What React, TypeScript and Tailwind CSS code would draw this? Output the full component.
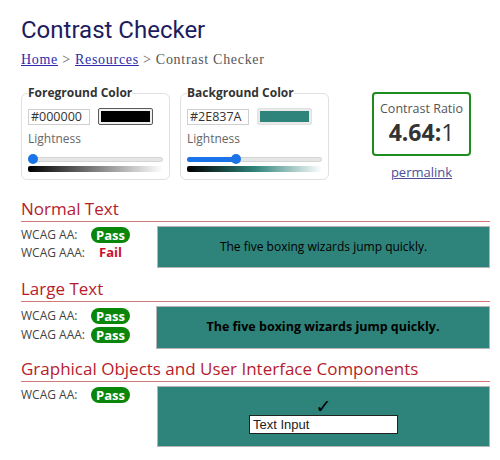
const TEAL = "#2E837A";

function Swatch({ color, dark }: { color: string; dark?: boolean }) {
  return (
    <div
      className={`w-[55px] h-[17px] rounded-[2px] p-[2px] ${
        dark ? "border border-[#5a5a5a] bg-[#efefef]" : "border border-[#e2e2e2] bg-[#e9e9e9]"
      }`}
    >
      <div className="w-full h-full" style={{ backgroundColor: color }} />
    </div>
  );
}

function Slider({ pos, gradient }: { pos: number; gradient: string }) {
  return (
    <>
      <div className="relative h-[10px] mt-[6px]">
        <div className="absolute left-0 right-0 top-[3px] h-[5px] rounded-full bg-[#e6e6e6] border border-[#d4d4d4]" />
        <div
          className="absolute left-0 top-[3px] h-[5px] rounded-full bg-[#1a73e8]"
          style={{ width: pos }}
        />
        <div
          className="absolute top-0 w-[10px] h-[10px] rounded-full bg-[#1a73e8]"
          style={{ left: pos - 5 < 0 ? 0 : pos - 5 }}
        />
      </div>
      <div className="h-[6px] mt-[2px] rounded-[2px]" style={{ background: gradient }} />
    </>
  );
}

function ColorBox({
  title,
  hex,
  color,
  dark,
  pos,
  gradient,
}: {
  title: string;
  hex: string;
  color: string;
  dark?: boolean;
  pos: number;
  gradient: string;
}) {
  return (
    <fieldset className="w-[149px] border border-[#e0e0e0] rounded-[6px] px-[6px] pb-[7px]">
      <legend className="text-[12px] leading-[16px] font-bold text-[#333]">{title}</legend>
      <div className="flex items-center gap-[8px] mt-[7px]">
        <div className="w-[62px] h-[16px] border border-[#cfcfcf] text-[12.5px] leading-[14px] text-[#333] pl-[2px]">
          {hex}
        </div>
        <Swatch color={color} dark={dark} />
      </div>
      <div className="mt-[5px] text-[12px] leading-[18px] text-[#666]">Lightness</div>
      <Slider pos={pos} gradient={gradient} />
    </fieldset>
  );
}

function Badge({ pass }: { pass: boolean }) {
  if (!pass) {
    return <span className="w-[39px] text-center text-[13px] font-bold text-[#c8102e]">Fail</span>;
  }
  return (
    <span className="w-[39px] h-[16px] rounded-full bg-[#0a870a] text-white text-[13px] leading-[16px] font-bold text-center">
      Pass
    </span>
  );
}

function Row({ label, pass, h }: { label: string; pass: boolean; h: string }) {
  return (
    <div className={`flex items-center ${h}`}>
      <span className="w-[70px] text-[12px] text-[#444]">{label}</span>
      <Badge pass={pass} />
    </div>
  );
}

function Heading({ children, mt }: { children: React.ReactNode; mt: string }) {
  return (
    <h2 className={`${mt} text-[17px] leading-[24px] text-[#b71c2c] border-b border-[#d07a7a]`}>
      {children}
    </h2>
  );
}

export default function App() {
  return (
    <div
      className="w-[500px] h-[460px] bg-white pl-[21px] pr-[10px] overflow-hidden"
      style={{ fontFamily: '"Open Sans", sans-serif' }}
    >
      <h1
        className="pt-[15px] text-[24px] leading-[30px] text-[#1c1c5e]"
        style={{ fontFamily: "Roboto, sans-serif" }}
      >
        Contrast Checker
      </h1>
      <div
        className="mt-[6px] text-[14px] leading-[18px] tracking-[0.7px] text-[#555]"
        style={{ fontFamily: '"Liberation Serif", serif' }}
      >
        <a href="#" className="text-[#2b2bab] underline">Home</a> &gt;{" "}
        <a href="#" className="text-[#2b2bab] underline">Resources</a> &gt; Contrast Checker
      </div>

      <div className="flex items-start mt-[16px]">
        <ColorBox
          title="Foreground Color"
          hex="#000000"
          color="#000000"
          dark
          pos={0}
          gradient="linear-gradient(to right, #000, #fff)"
        />
        <div className="ml-[10px]">
          <ColorBox
            title="Background Color"
            hex="#2E837A"
            color={TEAL}
            pos={49}
            gradient="linear-gradient(to right, #000, #2E837A 50%, #fff)"
          />
        </div>
        <div className="ml-[43px] mt-[7px] flex flex-col items-center">
          <div className="w-[99px] h-[64px] border-2 border-[#1e8c1e] rounded-[4px] flex flex-col items-center pt-[6px]">
            <span className="text-[12.5px] leading-[18px] text-[#555]">Contrast Ratio</span>
            <span className="text-[23px] leading-[28px] text-[#333]">
              <b>4.64:</b>1
            </span>
          </div>
          <a href="#" className="mt-[7px] text-[13px] leading-[18px] text-[#4d4d99] underline">
            permalink
          </a>
        </div>
      </div>

      <Heading mt="mt-[16px]">Normal Text</Heading>
      <div className="flex mt-[4px]">
        <div className="w-[136px] flex flex-col">
          <Row label="WCAG AA:" pass h="h-[18px]" />
          <Row label="WCAG AAA:" pass={false} h="h-[18px]" />
        </div>
        <div
          className="flex-1 h-[42px] border border-[#b5b5b5] flex items-center justify-center text-[12px] text-black"
          style={{ backgroundColor: TEAL }}
        >
          The five boxing wizards jump quickly.
        </div>
      </div>

      <Heading mt="mt-[9px]">Large Text</Heading>
      <div className="flex mt-[4px]">
        <div className="w-[135px] flex flex-col">
          <Row label="WCAG AA:" pass h="h-[19px]" />
          <Row label="WCAG AAA:" pass h="h-[19px]" />
        </div>
        <div
          className="flex-1 h-[43px] border border-[#b5b5b5] flex items-center justify-center text-[12.5px] font-bold text-black"
          style={{ backgroundColor: TEAL }}
        >
          The five boxing wizards jump quickly.
        </div>
      </div>

      <Heading mt="mt-[8px]">Graphical Objects and User Interface Components</Heading>
      <div className="flex mt-[4px]">
        <div className="w-[136px] flex flex-col">
          <Row label="WCAG AA:" pass h="h-[18px]" />
        </div>
        <div
          className="flex-1 h-[61px] border border-[#b5b5b5] flex flex-col items-center pt-[11px]"
          style={{ backgroundColor: TEAL }}
        >
          <span
            className="h-[17px] text-[19px] leading-[17px] text-black"
            style={{ fontFamily: '"DejaVu Sans", sans-serif' }}
          >
            ✓
          </span>
          <div
            className="w-[149px] h-[19px] bg-white border border-[#222] text-[13px] leading-[17px] text-[#222] pl-[3px]"
            style={{ fontFamily: '"Liberation Sans", Arial, sans-serif' }}
          >
            Text Input
          </div>
        </div>
      </div>
    </div>
  );
}
